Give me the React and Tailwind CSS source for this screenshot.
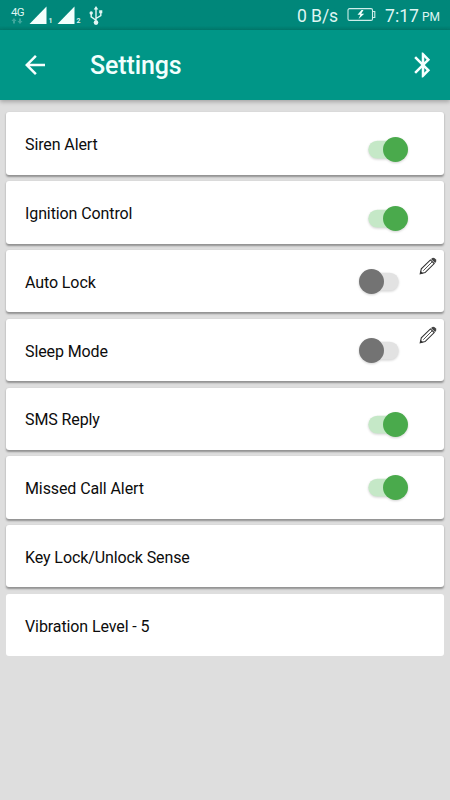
const settings = [
  { label: 'Siren Alert', on: true, offset: 'mt-[24.7px]' },
  { label: 'Ignition Control', on: true, offset: 'mt-[24.7px]' },
  { label: 'Auto Lock', on: false, editable: true, offset: 'mt-[18.8px]' },
  { label: 'Sleep Mode', on: false, editable: true, offset: 'mt-[18.8px]' },
  { label: 'SMS Reply', on: true, offset: 'mt-[24.7px]' },
  { label: 'Missed Call Alert', on: true, offset: 'mt-[18.8px]' },
  { label: 'Key Lock/Unlock Sense' },
  { label: 'Vibration Level - 5' },
]

const Signal = ({ sim }) => (
  <div className="flex items-end">
    <svg className="w-[18px] h-[18px]" viewBox="0 0 18 18" fill="#f4fffd">
      <path d="M0.5 18 L17.5 0.5 V18 Z" />
    </svg>
    <span className="w-[10px] pl-[2px] text-[7px] leading-[6px] font-bold text-[#d8f3ef]">{sim}</span>
  </div>
)

const StatusBar = () => (
  <div className="h-[30px] flex items-start justify-between bg-linear-to-b from-[#00877a] from-85% to-[#007a6d] text-[#dff5f2]">
    <div className="flex items-start pl-[11px] pt-[6px]">
      <div className="w-[17.5px] pt-[1px] flex flex-col">
        <span className="text-[11.5px] leading-[10px] tracking-[-0.6px]">4G</span>
        <svg className="w-[12px] h-[6px] mt-[1px]" viewBox="0 0 12 6" fill="#3fa79c">
          <path d="M3 0 L5.5 3 H4 V5.5 H2 V3 H0.5 Z M9 6 L11.5 3 H10 V0.5 H8 V3 H6.5 Z" />
        </svg>
      </div>
      <Signal sim="1" />
      <Signal sim="2" />
      <svg className="w-[14px] h-[20px] ml-[4px]" viewBox="0 0 14 20" fill="none" stroke="#e2f7f4" strokeWidth="1.4">
        <path d="M7 17 V3 M7 14.2 L2.2 10.8 V7.5 M7 12.5 L11.8 9.6 V6.5" />
        <path d="M7 0 L9.3 3.5 H4.7 Z M10.2 4.2 H13.3 V7.3 H10.2 Z" fill="#e2f7f4" stroke="none" />
        <circle cx="2.2" cy="7" r="1.7" fill="#e2f7f4" stroke="none" />
        <circle cx="7" cy="16.6" r="2.3" fill="#e2f7f4" stroke="none" />
      </svg>
    </div>
    <div className="flex items-start pr-[10px] pt-[5px] leading-[22px]">
      <span className="w-[50px] text-[17.6px] tracking-[-0.1px] whitespace-nowrap">0 B/s</span>
      <svg className="w-[29px] h-[13px] mt-[3px]" viewBox="0 0 29 13" fill="none" stroke="#cdeeea">
        <rect x="1" y="0.6" width="24.5" height="11.8" rx="1.5" strokeWidth="1.1" />
        <path d="M26 3.5 H27.8 V9.5 H26" strokeWidth="1.1" />
        <path d="M14.5 2 L10.5 6.8 H13.4 L11.6 11 L17.2 5.7 H14.2 L16.5 2 Z" fill="#f2fffd" stroke="none" />
      </svg>
      <span className="ml-[9px] w-[37px] text-[17.6px] whitespace-nowrap">7:17</span>
      <span className="pt-[1px] text-[12px] w-[18px]">PM</span>
    </div>
  </div>
)

const AppBar = () => (
  <header className="h-[70px] flex items-center bg-[#009687] shadow-[0_2px_4px_rgba(0,0,0,0.25)]">
    <svg className="w-[30px] h-[30px] ml-[20px]" viewBox="0 0 24 24" fill="#f6fffe">
      <path d="M20 11H7.83l5.59-5.59L12 4l-8 8 8 8 1.41-1.41L7.83 13H20v-2z" />
    </svg>
    <h1 className="ml-[40px] pt-[2px] text-[25px] leading-[30px] tracking-[-0.12px] font-medium text-[#f2fffd]">Settings</h1>
    <svg className="w-[30px] h-[30px] ml-auto mr-[12px]" viewBox="0 0 24 24" fill="#f6fffe">
      <path d="M17.71 7.71L12 2h-1v7.59L6.41 5 5 6.41 10.59 12 5 17.59 6.41 19 11 14.41V22h1l5.71-5.71-4.3-4.29 4.3-4.29zM13 5.83l1.88 1.88L13 9.59V5.83zm1.88 10.46L13 18.17v-3.76l1.88 1.88z" />
    </svg>
  </header>
)

const Toggle = ({ on }) => (
  <svg className="w-[40px] h-[25px] overflow-visible drop-shadow-[0_1.5px_1px_rgba(0,0,0,0.18)]" viewBox="0 0 40 25">
    <rect x={on ? 0.3 : 10} y="3.7" width="29.7" height="17.8" rx="8.9" fill={on ? '#c5e8c7' : '#e2e2e2'} />
    <circle cx={on ? 27.5 : 12.5} cy="12.5" r="12.5" fill={on ? '#4aaa4c' : '#737373'} />
  </svg>
)

const Pencil = () => (
  <svg className="w-[18px] h-[18px]" viewBox="0 0 18 18" fill="none" stroke="#333" strokeWidth="1.1">
    <path d="M1.2 16.8 L2.3 11.8 L11.4 2.9 L15.2 6.6 L6.1 15.6 Z" />
    <path d="M4.3 13.7 L13 5" stroke="#555" strokeWidth="1" />
    <path d="M1 17 L1.7 13.9 L4.2 16.2 Z" fill="#333" stroke="none" />
    <path d="M12.4 1.7 Q14 0.1 15.7 1.3 L17 2.6 Q17.9 4 16.6 5.5 L16.1 6 L12 2.1 Z" fill="#444" stroke="none" />
  </svg>
)

const SettingCard = ({ label, on, editable, offset }) => (
  <li className="h-[62.4px] flex items-start rounded-[3px] bg-white shadow-[0_1.5px_2px_rgba(0,0,0,0.35)] last:shadow-none">
    <span className="ml-[19px] mt-[20.8px] text-[16px] leading-[24px] tracking-[-0.1px] text-[#0c0c0c]">{label}</span>
    {offset && (
      <div className="ml-auto flex items-start">
        <div className={offset}>
          <Toggle on={on} />
        </div>
        {editable ? (
          <div className="ml-[20px] mr-[7.5px] mt-[7px]">
            <Pencil />
          </div>
        ) : (
          <div className="w-[36px]" />
        )}
      </div>
    )}
  </li>
)

const App = () => {
  return (
    <div className="h-[800px] w-full overflow-hidden bg-[#dedede] font-['Roboto',sans-serif]">
      <StatusBar />
      <AppBar />
      <ul className="flex flex-col gap-[6.4px] px-[6px] pt-[12.4px]">
        {settings.map((item) => (
          <SettingCard key={item.label} {...item} />
        ))}
      </ul>
    </div>
  )
}

export default App
